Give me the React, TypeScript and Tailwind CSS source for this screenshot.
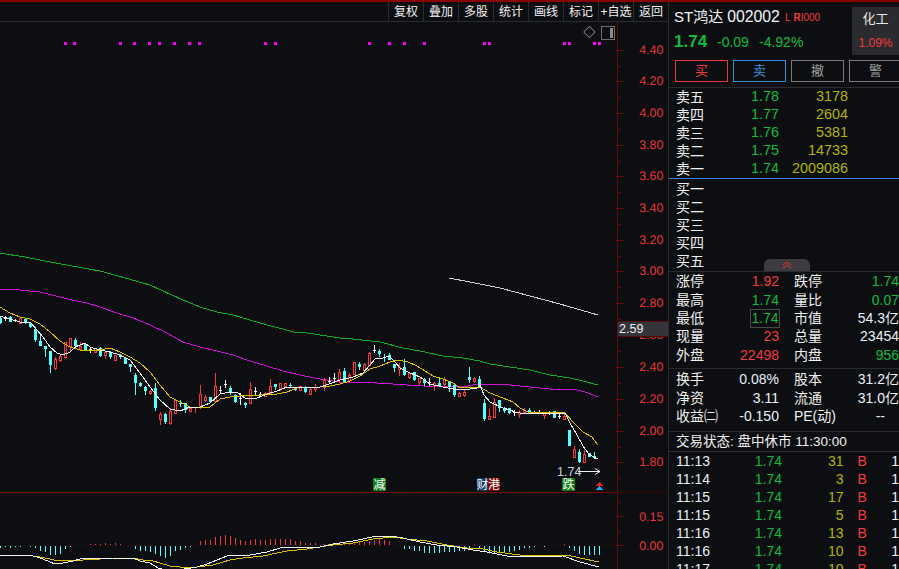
import React from "react";

const FONT = '"Liberation Sans", "Noto Sans CJK SC", sans-serif';

type Candle = [number, "r" | "c" | "w", number, number, number, number];

const candles: Candle[] = [
  [0, "c", 317, 318, 323, 324], [5, "w", 316, 318, 318, 321], [10, "c", 316, 317, 322, 322], [15, "w", 319, 320, 320, 322],
  [20, "r", 318, 318, 323, 323], [25, "c", 318, 319, 322, 324], [30, "c", 322, 323, 327, 328], [35, "c", 327, 329, 340, 342],
  [40, "c", 334, 341, 346, 346], [45, "c", 346, 346, 349, 357], [50, "c", 351, 351, 365, 373], [55, "r", 357, 359, 368, 370],
  [60, "r", 354, 356, 360, 362], [65, "r", 342, 342, 357, 358], [70, "r", 338, 338, 346, 352], [75, "c", 338, 340, 346, 349],
  [80, "r", 342, 346, 349, 350], [85, "c", 343, 344, 350, 350], [90, "w", 347, 349, 349, 353], [95, "r", 348, 348, 352, 353],
  [100, "c", 347, 348, 356, 357], [105, "r", 351, 352, 355, 359], [110, "c", 351, 352, 357, 359], [115, "r", 355, 355, 360, 360],
  [120, "c", 354, 355, 357, 359], [125, "c", 357, 358, 364, 364], [130, "c", 364, 364, 367, 372], [135, "c", 373, 375, 383, 395],
  [140, "c", 382, 383, 386, 387], [145, "c", 386, 387, 391, 395], [150, "r", 390, 391, 393, 395], [155, "c", 383, 388, 408, 411],
  [160, "r", 412, 414, 419, 425], [165, "c", 413, 414, 422, 424], [170, "r", 408, 411, 423, 425], [175, "r", 400, 400, 413, 413],
  [180, "c", 400, 403, 404, 407], [185, "c", 403, 403, 410, 413], [190, "r", 407, 408, 411, 411], [195, "r", 407, 409, 409, 413],
  [200, "r", 385, 394, 407, 409], [205, "r", 395, 397, 400, 402], [210, "c", 397, 397, 402, 403], [215, "r", 373, 386, 401, 402],
  [220, "w", 386, 390, 390, 393], [225, "w", 380, 384, 384, 388], [230, "c", 386, 388, 393, 395], [235, "c", 394, 395, 402, 403],
  [240, "w", 393, 398, 398, 405], [245, "c", 402, 403, 405, 408], [250, "r", 382, 389, 403, 403], [255, "w", 387, 391, 391, 395],
  [260, "w", 392, 394, 394, 397], [265, "r", 392, 393, 396, 397], [270, "r", 379, 386, 393, 393], [275, "c", 384, 384, 387, 390],
  [280, "r", 383, 383, 388, 391], [285, "r", 383, 383, 386, 386], [290, "c", 383, 385, 386, 388], [295, "c", 387, 387, 390, 391],
  [300, "r", 386, 386, 390, 391], [305, "c", 386, 388, 392, 393], [310, "r", 388, 389, 394, 395], [315, "r", 384, 387, 389, 392],
  [324, "r", 378, 380, 387, 391], [329, "w", 377, 381, 381, 383], [334, "w", 373, 378, 378, 383], [339, "r", 369, 372, 379, 383],
  [344, "c", 368, 371, 383, 383], [349, "r", 373, 375, 380, 382], [354, "r", 362, 362, 374, 375], [359, "c", 362, 364, 367, 370],
  [364, "r", 363, 364, 370, 371], [369, "r", 352, 353, 365, 365], [374, "w", 345, 350, 350, 353], [379, "c", 349, 351, 354, 357],
  [384, "c", 354, 357, 358, 362], [389, "c", 353, 355, 360, 360], [394, "c", 364, 364, 368, 372], [399, "r", 363, 367, 369, 376],
  [404, "c", 359, 367, 375, 376], [409, "r", 372, 373, 377, 379], [414, "c", 372, 372, 380, 381], [419, "r", 378, 378, 382, 385],
  [424, "c", 378, 379, 383, 386], [429, "w", 378, 382, 382, 386], [434, "r", 382, 383, 386, 391], [439, "c", 378, 383, 386, 387],
  [444, "r", 377, 379, 384, 387], [449, "c", 381, 381, 387, 392], [454, "c", 385, 385, 395, 397], [459, "r", 392, 393, 396, 397],
  [464, "r", 389, 392, 395, 397], [469, "c", 367, 377, 380, 383], [474, "r", 377, 378, 381, 383], [479, "c", 376, 379, 387, 387],
  [484, "c", 399, 403, 419, 421], [489, "r", 409, 416, 419, 420], [494, "r", 398, 402, 417, 417], [499, "c", 400, 400, 408, 412],
  [504, "c", 407, 408, 411, 413], [509, "c", 408, 408, 413, 414], [514, "w", 410, 412, 412, 416], [519, "r", 410, 412, 414, 418],
  [524, "r", 408, 410, 412, 413], [529, "c", 408, 410, 412, 413], [534, "w", 411, 412, 412, 414], [539, "w", 410, 412, 412, 414],
  [544, "r", 412, 412, 415, 419], [549, "w", 411, 412, 412, 415], [554, "c", 411, 411, 418, 418], [559, "w", 414, 416, 416, 419],
  [564, "r", 413, 416, 419, 419], [569, "c", 430, 430, 446, 446], [574, "r", 446, 449, 457, 457], [579, "c", 449, 452, 462, 463],
  [584, "r", 450, 454, 462, 463], [589, "c", 453, 453, 457, 457], [594, "c", 452, 456, 458, 459],
];

const ma5 = "0,316 10,319 20,322 30,322 37,330 43,337 50,347 57,353 63,355 70,352 75,347 80,345 85,343 90,347 100,350 110,352 120,355 130,360 140,373 150,387 160,400 170,409 180,411 190,407 200,407 210,403 220,394 230,392 237,392 245,398 257,398 267,394 277,391 287,387 295,387 305,388 320,387 329,384 340,380 353,377 363,373 370,365 375,359 383,358 389,356 395,362 400,368 410,373 420,377 430,384 443,387 453,389 463,390 477,388 480,385 484,395 490,402 503,408 510,410 515,412 520,413 565,413 570,423 577,435 583,446 588,453 593,457 598,459";
const ma10 = "0,307 10,313 20,317 30,319 40,324 50,332 60,341 70,347 80,350 90,351 100,350 110,348 120,352 130,357 140,363 150,372 160,385 170,397 180,402 190,407 200,408 210,407 220,399 230,397 240,396 260,395 277,394 287,392 297,388 320,387 330,386 340,384 350,381 360,376 370,369 380,366 390,362 398,360 408,362 417,366 425,371 433,376 443,379 453,383 460,388 470,387 480,387 490,393 503,398 513,402 520,408 528,412 565,413 573,422 583,432 592,437 598,445";
const ma20 = "0,289 20,290 40,292 72,300 87,303 100,307 117,313 133,318 150,325 167,333 183,342 200,347 217,351 233,355 250,361 267,366 283,371 300,375 320,379 340,382 360,382 393,384 407,385 423,386 463,387 478,384 510,385 530,387 550,389 573,389 585,392 598,397";
const ma60 = "0,253 25,257 50,262 100,271 150,285 183,300 200,307 217,312 233,315 250,320 267,325 283,329 293,332 307,333 320,335 340,338 353,339 380,342 403,348 420,351 443,356 463,358 480,361 490,364 510,367 530,370 550,375 570,378 583,381 598,385";
const ma120 = "449,278 470,282 500,288 530,296 560,304 598,315";
const macdWhite = "0,555 33,556 37,557 43,559 50,562 55,564 63,563 73,561 80,559 113,558 133,558 140,561 150,563 158,568 165,570 178,570 197,567 207,564 217,560 227,556 250,555 267,552 280,548 290,547 320,547 333,544 353,541 377,536 390,536 403,538 420,542 437,545 457,547 473,550 487,552 507,556 523,557 563,556 580,562 599,567";
const macdYellow = "0,555 33,556 40,557 50,559 58,561 83,560 100,559 133,558 143,560 153,561 160,563 170,566 180,567 197,567 213,565 230,560 243,558 263,556 277,553 287,551 307,549 320,547 333,545 353,543 373,539 393,537 407,539 427,541 447,545 467,548 483,549 497,552 520,555 567,555 580,558 599,562";

// [x, height] negative goes below zero (cyan)
const macdBars: [number, number][] = [
  [0, -2], [5, -1], [10, -2], [15, -1], [20, -1], [30, -1], [35, -2], [40, -5], [45, -6], [50, -9], [55, -9], [60, -8], [65, -3], [70, -1],
  [90, 1], [95, 1], [100, 1], [105, 2], [110, 1], [115, 2], [120, 1],
  [135, -3], [140, -5], [145, -5], [150, -6], [155, -8], [160, -10], [165, -12], [170, -10], [175, -5], [180, -4], [185, -2], [190, -1],
  [200, 4], [205, 5], [210, 5], [215, 8], [220, 9], [225, 10], [230, 9], [235, 7], [240, 5], [245, 4], [250, 5], [255, 6], [260, 5], [265, 5], [270, 6], [275, 6], [280, 6], [285, 6], [290, 6], [295, 4], [300, 4], [305, 2], [310, 2], [315, 2],
  [323, 1], [328, 1], [333, 2], [339, 3], [344, 1], [349, 2], [354, 2], [359, 3], [364, 3], [369, 4], [374, 5], [379, 6], [384, 5], [389, 4],
  [404, -3], [409, -3], [414, -5], [419, -5], [424, -7], [429, -7], [434, -7], [439, -7], [444, -6], [449, -6], [454, -6], [459, -5], [464, -5], [469, -3], [474, 1], [479, -2], [484, -6], [489, -6], [494, -7], [499, -7], [504, -6], [509, -6], [514, -5], [519, -4], [524, -2], [529, -2], [534, -1], [544, -1],
  [564, 1], [569, -2], [574, -5], [579, -8], [584, -9], [589, -9], [594, -9], [599, -9],
];

const dots = [64, 73, 119, 133, 148, 158, 173, 188, 198, 264, 274, 368, 388, 403, 423, 483, 488, 563, 568, 593, 598];
const grid = [50, 81, 113, 145, 176, 208, 240, 271, 303, 335, 367, 399, 431, 462];
const prices = ["4.40", "4.20", "4.00", "3.80", "3.60", "3.40", "3.20", "3.00", "2.80", "2.60", "2.40", "2.20", "2.00", "1.80"];

const tools = ["复权", "叠加", "多股", "统计", "画线", "标记", "+自选", "返回"];

const RED = "text-[#f23a3f]";
const GREEN = "text-[#0fbc3e]";
const YELLOW = "text-[#b4b400]";

function Chart() {
  return (
    <svg viewBox="0 22 668 547" className="absolute inset-0 h-full w-full" fontFamily={FONT} shapeRendering="crispEdges">
      {grid.map((y) => (
        <line key={y} x1="0" x2="617" y1={y + 0.5} y2={y + 0.5} stroke="#4a1214" strokeDasharray="1 7" />
      ))}
      <line x1="0" x2="617" y1="516.5" y2="516.5" stroke="#4a1214" strokeDasharray="1 7" />
      <line x1="0" x2="617" y1="545.5" y2="545.5" stroke="#4a1214" strokeDasharray="1 3" />

      {/* y axis */}
      <line x1="617.5" x2="617.5" y1="22" y2="569" stroke="#640808" />
      {grid.map((y) => (
        <g key={y}>
          <line x1="617" x2="625" y1={y + 0.5} y2={y + 0.5} stroke="#640808" />
          <line x1="617" x2="621" y1={y + 16.5} y2={y + 16.5} stroke="#640808" />
        </g>
      ))}
      <line x1="617" x2="625" y1="516.5" y2="516.5" stroke="#640808" />
      <line x1="617" x2="625" y1="545.5" y2="545.5" stroke="#640808" />
      <line x1="617" x2="621" y1="531.5" y2="531.5" stroke="#640808" />
      <line x1="617" x2="621" y1="502.5" y2="502.5" stroke="#640808" />
      <line x1="0" x2="617" y1="492.5" y2="492.5" stroke="#740606" />
      <line x1="617" x2="668" y1="492.5" y2="492.5" stroke="#3c0505" />

      <g shapeRendering="auto" textRendering="geometricPrecision">
        {prices.map((p, i) => (
          <text key={p} x="663.5" y={grid[i] + 4} textAnchor="end" fontSize="12.5" fill="#e8363a">{p}</text>
        ))}
        <text x="663.5" y="521" textAnchor="end" fontSize="12.5" fill="#e8363a">0.15</text>
        <text x="663.5" y="550" textAnchor="end" fontSize="12.5" fill="#e8363a">0.00</text>
      </g>

      {dots.map((x) => (
        <rect key={x} x={x} y="42" width="3" height="3" fill="#ff00ff" />
      ))}

      {/* diamond and panel toggle */}
      <rect x="585.5" y="28" width="8" height="8" fill="none" stroke="#7a7a7a" transform="rotate(45 589.5 32)" shapeRendering="auto" />
      <rect x="601.5" y="26.5" width="13" height="13" fill="none" stroke="#6e6e6e" />
      <rect x="610" y="28" width="3" height="10" fill="#8a8a8a" />

      <polyline points={ma120} fill="none" stroke="#d0d0d0" />
      <polyline points={ma60} fill="none" stroke="#0fae24" />
      <polyline points={ma20} fill="none" stroke="#d010d8" />

      {candles.map(([x, t, wt, top, bot, wb]) => {
        const color = t === "r" ? "#f23a3f" : t === "c" ? "#54ffff" : "#f0f0f0";
        return (
          <g key={x}>
            <rect x={x} y={wt} width="1" height={wb - wt} fill={color} />
            {t === "r" && <rect x={x - 0.5} y={top + 0.5} width="2" height={bot - top} fill="#0d0e11" stroke={color} />}
            {t === "c" && <rect x={x - 1} y={top} width="3" height={bot - top} fill={color} />}
            {t === "w" && <rect x={x - 1} y={top} width="3" height="1" fill={color} />}
          </g>
        );
      })}

      <polyline points={ma10} fill="none" stroke="#dcc000" />
      <polyline points={ma5} fill="none" stroke="#f4f4f4" />

      {/* last price tag */}
      <g shapeRendering="auto">
        <text x="557" y="476" fontSize="12.5" fill="#c4d4e8">1.74</text>
        <path d="M578 471.5H600M595 468.5L600 471.5L595 474.5" fill="none" stroke="#f0f0f0" />
      </g>

      {/* event badges */}
      <rect x="373" y="478" width="13" height="13" fill="#0a7a12" />
      <rect x="477" y="478" width="11" height="13" fill="#0f3a66" />
      <rect x="488" y="478" width="12" height="13" fill="#7a0707" />
      <rect x="562" y="478" width="13" height="13" fill="#0a7a12" />
      <g shapeRendering="auto" fontSize="12" fill="#ffffff" textAnchor="middle">
        <text x="379.5" y="489">减</text>
        <text x="482.5" y="489">财</text>
        <text x="494" y="489">港</text>
        <text x="568.5" y="489">跌</text>
      </g>
      <path d="M595 486L599 482L603 486Z" fill="#e82020" />
      <path d="M595 490L599 486L603 490Z" fill="#22a4f0" />

      {/* macd */}
      {macdBars.map(([x, h]) => (
        <rect key={x} x={x} y={h > 0 ? 545 - h : 546} width="1" height={Math.abs(h)} fill={h > 0 ? "#f23a3f" : "#54ffff"} />
      ))}
      <polyline points={macdYellow} fill="none" stroke="#dcc000" />
      <polyline points={macdWhite} fill="none" stroke="#f4f4f4" />
    </svg>
  );
}

function Toolbar() {
  return (
    <div className="flex h-5 justify-end border-b border-[#2a2b2e] pl-[387px]">
      {tools.map((t) => (
        <div key={t} className="flex w-[35px] items-center justify-center whitespace-nowrap border-l border-[#2a2b2e] text-xs text-[#f0f0f0]">
          {t}
        </div>
      ))}
    </div>
  );
}

function Book({ rows }: { rows: [string, string, string][] }) {
  return (
    <>
      {rows.map(([label, price, vol]) => (
        <div key={label} className="flex h-[18px] items-center">
          <span className="w-[82px] pl-[7px] text-sm text-[#f0f0f0]">{label}</span>
          <span className={`w-7 text-right ${GREEN}`}>{price}</span>
          <span className={`w-[69px] text-right ${YELLOW}`}>{vol}</span>
        </div>
      ))}
    </>
  );
}

type Stat = [string, string, string, string, string, string];

const stats: Stat[] = [
  ["涨停", "1.92", RED, "跌停", "1.74", GREEN],
  ["最高", "1.74", GREEN, "量比", "0.07", GREEN],
  ["最低", "1.74", GREEN, "市值", "54.3亿", "text-[#e8f0f8]"],
  ["现量", "23", RED, "总量", "23454", "text-[#e8f0f8]"],
  ["外盘", "22498", RED, "内盘", "956", GREEN],
];

const stats2: Stat[] = [
  ["换手", "0.08%", "text-[#e8f0f8]", "股本", "31.2亿", "text-[#e8f0f8]"],
  ["净资", "3.11", "text-[#e8f0f8]", "流通", "31.0亿", "text-[#e8f0f8]"],
  ["收益㈡", "-0.150", "text-[#e8f0f8]", "PE(动)", "--", "text-[#e8f0f8]"],
];

function StatRow({ row, boxed }: { row: Stat; boxed?: boolean }) {
  const [a, av, ac, b, bv, bc] = row;
  return (
    <div className="flex h-[18.4px] items-center whitespace-nowrap text-sm">
      <span className="w-[60px] pl-[7px] text-[#f0f0f0]">{a}</span>
      <span className={`w-[51px] text-right ${ac}`}>
        {boxed ? <span className="-mr-px inline-block h-[19px] w-[30px] border border-[#4a4a4a] text-center leading-[17px]">{av}</span> : av}
      </span>
      <span className="w-[65px] pl-[15px] text-[#f0f0f0]">{b}</span>
      <span className={`w-[56px] text-right ${bc} ${bv === "--" ? "pr-[14px]" : ""}`}>{bv}</span>
    </div>
  );
}

const ticks: [string, string][] = [
  ["11:13", "31"], ["11:14", "3"], ["11:15", "17"], ["11:15", "5"], ["11:16", "13"], ["11:16", "10"], ["11:17", "10"],
];

function Panel() {
  return (
    <div className="h-full w-[231px] overflow-hidden border-l border-[#2a2b2e] text-[14.4px]">
      <div className="flex h-[58px]">
        <div className="w-[183px] pl-[5px]">
          <div className="flex h-[25px] items-end whitespace-nowrap leading-5 text-[#f0f4f8]">
            <span className="text-[15px]">ST鸿达</span>
            <span className="ml-1 text-[15.8px]">002002</span>
            <span className={`mb-[3px] ml-[5px] text-[10px] leading-3 ${RED}`}>L</span>
            <span className={`mb-[3px] ml-[3px] text-[10px] leading-3 ${RED}`}><b>R</b>I000</span>
          </div>
          <div className={`mt-[5px] flex items-center whitespace-nowrap text-sm leading-5 ${GREEN}`}>
            <span className="w-[43px] text-[17px] font-bold">1.74</span>
            <span className="w-[42px]">-0.09</span>
            <span>-4.92%</span>
          </div>
        </div>
        <div className="mt-[5px] flex h-12 w-[47px] flex-col items-center bg-[#2a2b2e]">
          <span className="mt-[2px] text-[13px] text-[#e8e8e8]">化工</span>
          <span className={`mt-[6px] text-xs ${RED}`}>1.09%</span>
        </div>
      </div>
      <div className="flex h-[22px] gap-[5px] pl-[6px] text-[13px]">
        <div className={`flex w-[53px] shrink-0 items-center justify-center border border-[#e8363a] ${RED}`}>买</div>
        <div className="flex w-[53px] shrink-0 items-center justify-center border border-[#3a8ad0] text-[#3a8ad0]">卖</div>
        <div className="flex w-[53px] shrink-0 items-center justify-center border border-[#7a7a7a] text-[#a0a0a0]">撤</div>
        <div className="flex w-[53px] shrink-0 items-center justify-center border border-[#7a7a7a] text-[#a0a0a0]">警</div>
      </div>
      <div className="mt-[5px] border-t border-[#2a2b2e]">
        <Book rows={[["卖五", "1.78", "3178"], ["卖四", "1.77", "2604"], ["卖三", "1.76", "5381"], ["卖二", "1.75", "14733"], ["卖一", "1.74", "2009086"]]} />
      </div>
      <div className="relative h-[93px] border-t border-[#2f86d8] pt-px">
        <Book rows={[["买一", "", ""], ["买二", "", ""], ["买三", "", ""], ["买四", "", ""], ["买五", "", ""]]} />
        <div className="absolute bottom-0 left-[95px] flex h-3 w-[46px] items-center justify-center rounded-t-md bg-[#3c3c40]">
          <svg width="10" height="8" viewBox="0 0 10 8" fill="none" stroke="#e8363a">
            <path d="M1 4L5 1L9 4M1 7L5 4L9 7" />
          </svg>
        </div>
      </div>
      <div className="border-t border-[#2a2b2e]">
        {stats.map((s) => (
          <StatRow key={s[0]} row={s} boxed={s[0] === "最低"} />
        ))}
      </div>
      <div className="mt-1 border-t border-[#2a2b2e] pt-px">
        {stats2.map((s) => (
          <StatRow key={s[0]} row={s} />
        ))}
      </div>
      <div className="mt-[6px] flex h-[21px] items-center whitespace-nowrap border-y border-[#2a2b2e] pl-[7px] text-[13.5px] text-[#f0f0f0]">
        交易状态: 盘中休市 11:30:00
      </div>
      {ticks.map(([t, v], i) => (
        <div key={i} className="flex h-[18px] items-center whitespace-nowrap text-sm">
          <span className="w-[60px] pl-[7px] text-[#e8f0f8]">{t}</span>
          <span className={`w-[54px] text-right ${GREEN}`}>1.74</span>
          <span className={`w-[62px] text-right ${YELLOW}`}>{v}</span>
          <span className={`ml-[14px] w-[34px] ${RED}`}>B</span>
          <span className="text-[#e8f0f8]">1</span>
        </div>
      ))}
    </div>
  );
}

export default function App() {
  return (
    <div className="h-[569px] w-[899px] overflow-hidden bg-[#0d0e11]" style={{ fontFamily: FONT }}>
      <div className="h-0.5 bg-[#8a0000]" />
      <div className="flex h-[567px]">
        <div className="flex w-[668px] shrink-0 flex-col">
          <Toolbar />
          <div className="relative flex-1">
            <Chart />
            <div className="absolute left-[618px] top-[299px] flex h-[16px] w-[50px] items-center border-y border-[#5a0a0a] bg-[#34343a] pl-px text-[12.5px] text-[#f0f0f0]">
              2.59
            </div>
          </div>
        </div>
        <Panel />
      </div>
    </div>
  );
}
